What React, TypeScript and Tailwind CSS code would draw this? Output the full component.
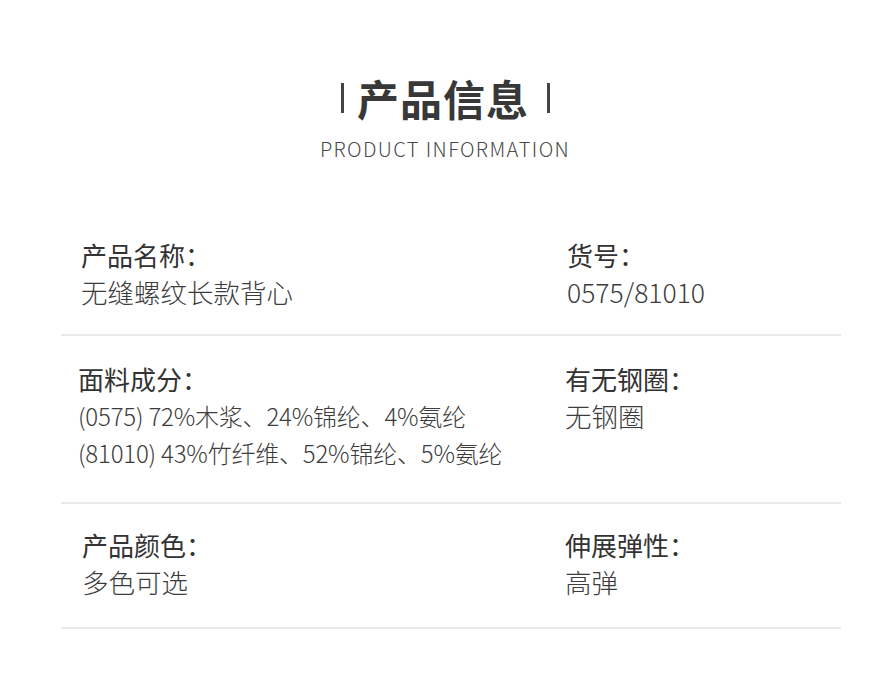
type Cell = { label: string; values: string[]; small?: boolean };

type Row = { pad: string; leftPad: string; rightPad: string; left: Cell; right: Cell };

const rows: Row[] = [
  {
    pad: 'pt-[0px] pb-[24px]',
    leftPad: 'pl-[20px]',
    rightPad: 'pl-[1px]',
    left: { label: '产品名称：', values: ['无缝螺纹长款背心'] },
    right: { label: '货号：', values: ['0575/81010'] },
  },
  {
    pad: 'pt-[24px] pb-[31px]',
    leftPad: 'pl-[17px]',
    rightPad: '-ml-[1px]',
    left: {
      label: '面料成分：',
      values: ['(0575) 72%木浆、24%锦纶、4%氨纶', '(81010) 43%竹纤维、52%锦纶、5%氨纶'],
      small: true,
    },
    right: { label: '有无钢圈：', values: ['无钢圈'] },
  },
  {
    pad: 'pt-[22px] pb-[27px]',
    leftPad: 'pl-[21px]',
    rightPad: '-ml-[1px]',
    left: { label: '产品颜色：', values: ['多色可选'] },
    right: { label: '伸展弹性：', values: ['高弹'] },
  },
];

function InfoCell({ cell }: { cell: Cell }) {
  return (
    <div>
      <p className="text-[26px] leading-[37px] font-normal text-[#333]">{cell.label}</p>
      {cell.values.map((v) => (
        <p
          key={v}
          className={`${
            cell.small ? 'text-[24px] tracking-[-0.2px]' : 'text-[26.5px]'
          } leading-[37px] font-light text-[#3c3c3c] whitespace-nowrap`}
        >
          {v}
        </p>
      ))}
    </div>
  );
}

export default function App() {
  return (
    <div
      className="w-[890px] h-[681px] bg-white text-[#333]"
      style={{ fontFamily: '"Noto Sans CJK SC", "Noto Sans", sans-serif' }}
    >
      {/* Heading */}
      <div className="pt-[72px] flex flex-col items-center">
        <div className="flex items-center h-[52px] ml-[1px]">
          <span className="w-[3px] h-[30px] bg-[#444]"></span>
          <h1 className="ml-[13px] mr-[18px] text-[42px] leading-[52px] font-bold tracking-[1px] text-[#383838]">
            产品信息
          </h1>
          <span className="w-[3px] h-[30px] bg-[#444]"></span>
        </div>
        <p className="mt-[13px] text-[20px] leading-[24px] font-light tracking-[1.4px] text-[#4a4a4a]">
          PRODUCT INFORMATION
        </p>
      </div>

      {/* Info table */}
      <div className="ml-[61px] w-[780px] mt-[75px]">
        {rows.map((row) => (
          <div key={row.left.label} className={`flex border-b-2 border-[#e9e9e9] ${row.pad}`}>
            <div className={`w-[505px] shrink-0 ${row.leftPad}`}>
              <InfoCell cell={row.left} />
            </div>
            <div className={`flex-1 ${row.rightPad}`}>
              <InfoCell cell={row.right} />
            </div>
          </div>
        ))}
      </div>
    </div>
  );
}
